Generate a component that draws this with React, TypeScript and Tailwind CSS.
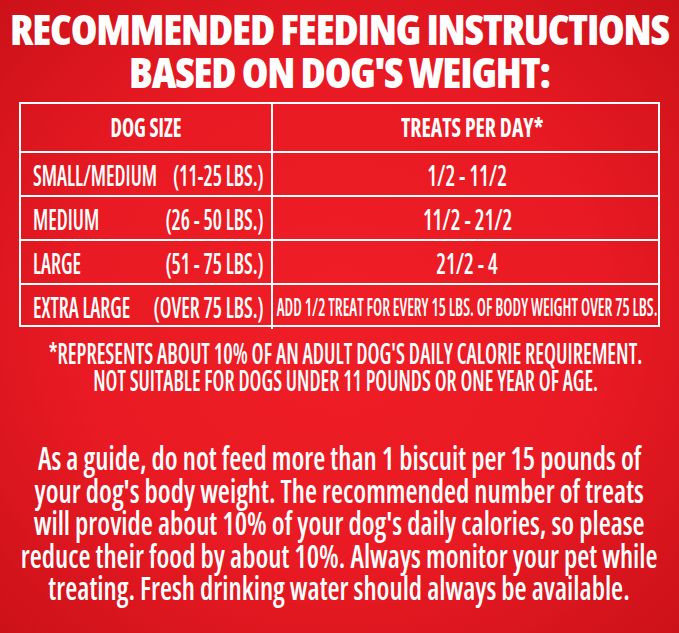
const rows = [
  { size: "SMALL/MEDIUM", range: "(11-25 LBS.)", treats: "1/2 - 11/2" },
  { size: "MEDIUM", range: "(26 - 50 LBS.)", treats: "11/2 - 21/2" },
  { size: "LARGE", range: "(51 - 75 LBS.)", treats: "21/2 - 4" },
  { size: "EXTRA LARGE", range: "(OVER 75 LBS.)", treats: "" },
];

// condensed line, centred even when its unscaled width is wider than the page
function Line({ children, className }: { children: React.ReactNode; className: string }) {
  return (
    <div className="flex justify-center">
      <span className={"shrink-0 whitespace-nowrap " + className}>{children}</span>
    </div>
  );
}

export default function App() {
  return (
    <div className="w-[679px] h-[633px] overflow-hidden bg-[radial-gradient(ellipse_at_center,#ef1d26_0%,#e91a23_55%,#cc1119_100%)] text-white font-['Open_Sans',sans-serif] font-stretch-condensed font-bold">
      {/* Title */}
      <div className="pt-[7px] text-[43px] leading-[43px] font-extrabold tracking-[-0.028em]">
        <Line className="scale-x-100">RECOMMENDED FEEDING INSTRUCTIONS</Line>
        <Line className="scale-x-100">BASED ON DOG'S WEIGHT:</Line>
      </div>

      {/* Table */}
      <div className="ml-[19px] mt-[9px] w-[641px] border-2 border-white">
        <div className="grid grid-cols-[252px_minmax(0,1fr)] h-[47px] text-[26px]">
          <div className="flex items-center justify-center border-r-2 border-white">
            <span className="shrink-0 scale-x-[0.79] whitespace-nowrap">DOG SIZE</span>
          </div>
          <div className="flex items-center justify-center pl-[14px]">
            <span className="shrink-0 scale-x-[0.835] whitespace-nowrap">TREATS PER DAY*</span>
          </div>
        </div>
        {rows.map((r) => (
          <div key={r.size} className="grid grid-cols-[252px_minmax(0,1fr)] h-[44px] border-t-2 border-white font-semibold last:h-[42px]">
            <div className="flex items-center pl-[12px] border-r-2 border-white text-[29px]">
              <div className="w-[325px] shrink-0 origin-left scale-x-[0.71] flex justify-between whitespace-nowrap">
                <span>{r.size}</span>
                <span>{r.range}</span>
              </div>
            </div>
            <div className="flex items-center justify-center">
              {r.treats ? (
                <span className="shrink-0 scale-x-[0.75] whitespace-nowrap text-[29px] ml-[4px]">{r.treats}</span>
              ) : (
                <span className="shrink-0 scale-x-[0.645] whitespace-nowrap text-[25px] ml-[4px]">
                  ADD 1/2 TREAT FOR EVERY 15 LBS. OF BODY WEIGHT OVER 75 LBS.
                </span>
              )}
            </div>
          </div>
        ))}
      </div>

      {/* Footnote */}
      <div className="mt-[12px] pl-[12px] text-[29px] leading-[27px] font-semibold">
        <Line className="scale-x-[0.73]">*REPRESENTS ABOUT 10% OF AN ADULT DOG'S DAILY CALORIE REQUIREMENT.</Line>
        <Line className="scale-x-[0.72]">NOT SUITABLE FOR DOGS UNDER 11 POUNDS OR ONE YEAR OF AGE.</Line>
      </div>

      {/* Guide */}
      <div className="mt-[49px] text-[32px] leading-[32.5px] font-semibold">
        <Line className="scale-x-[0.865]">As a guide, do not feed more than 1 biscuit per 15 pounds of</Line>
        <Line className="scale-x-[0.865]">your dog's body weight. The recommended number of treats</Line>
        <Line className="scale-x-[0.865]">will provide about 10% of your dog's daily calories, so please</Line>
        <Line className="scale-x-[0.865]">reduce their food by about 10%. Always monitor your pet while</Line>
        <Line className="scale-x-[0.865]">treating. Fresh drinking water should always be available.</Line>
      </div>
    </div>
  );
}
